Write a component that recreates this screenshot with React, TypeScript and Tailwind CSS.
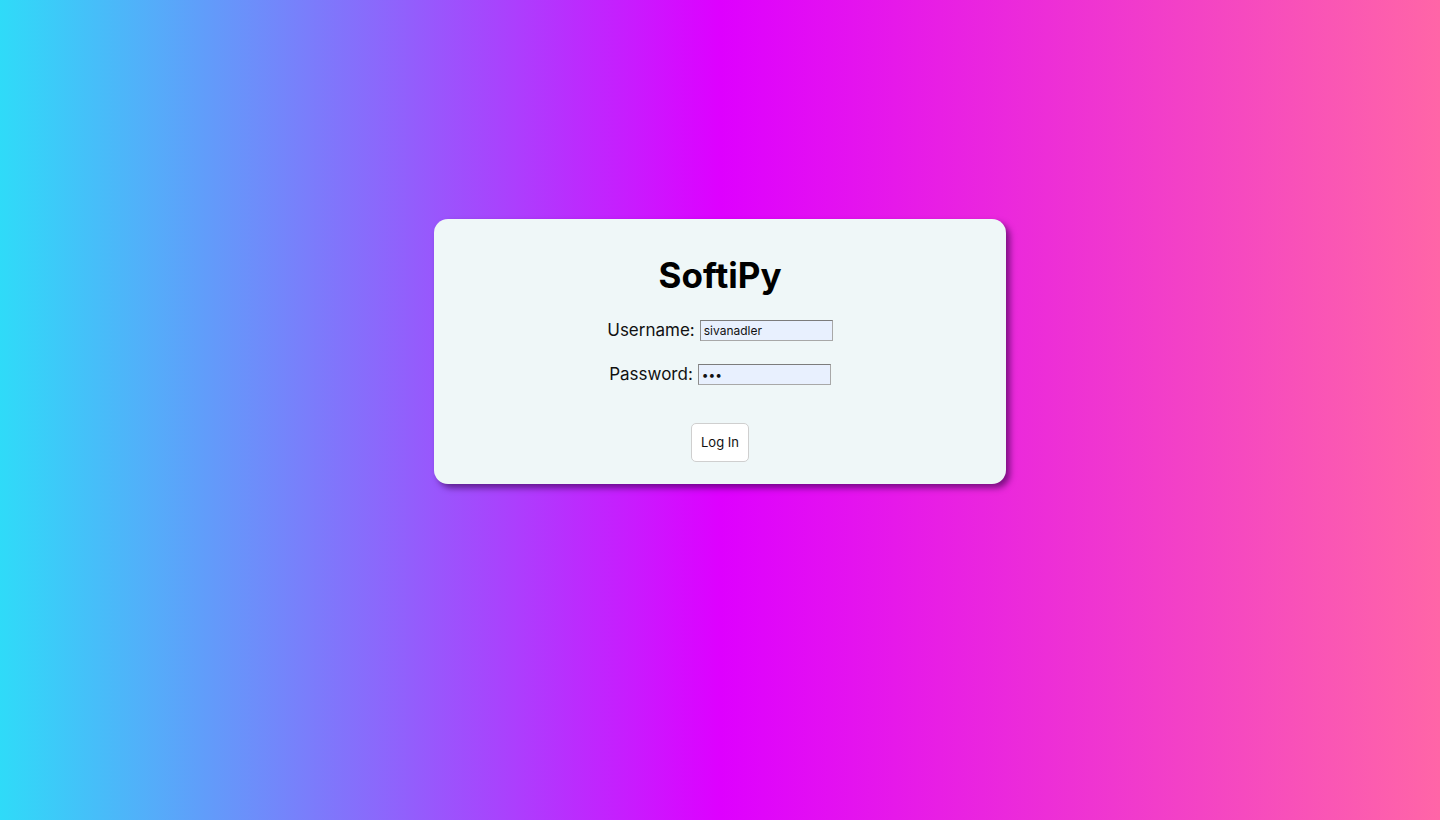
const LoginCard = () => {
  return (
    <div className="w-[572px] rounded-[14px] bg-[#eff7f8] shadow-[4px_4px_6px_rgba(50,0,70,0.6)] pt-[34px] pb-[22px] flex flex-col items-center">
      <h1 className="text-[35px] leading-[44px] font-bold text-black">SoftiPy</h1>
      <form className="flex flex-col items-center mt-[21px]" onSubmit={(e) => e.preventDefault()}>
        <div className="flex items-center h-[24px]">
          <label className="text-[17px] leading-[24px] text-[#111] mr-[5px]">Username:</label>
          <input
            type="text"
            defaultValue="sivanadler"
            className="w-[133px] h-[21px] bg-[#e8f0fe] border border-[#a8a8a8] border-t-[#7c7c7c] border-l-[#8c8c8c] px-[3px] text-[12px] text-[#111] outline-none"
          />
        </div>
        <div className="flex items-center h-[24px] mt-[20px]">
          <label className="text-[17px] leading-[24px] text-[#111] mr-[5px]">Password:</label>
          <input
            type="password"
            defaultValue="abc"
            className="w-[133px] h-[21px] bg-[#e8f0fe] border border-[#a8a8a8] border-t-[#7c7c7c] border-l-[#8c8c8c] px-[3px] text-[12px] text-[#111] outline-none"
          />
        </div>
        <button
          type="submit"
          className="mt-[37px] w-[58px] h-[39px] bg-white border border-[#cfcfcf] rounded-[5px] text-[13px] text-[#111]"
        >
          Log In
        </button>
      </form>
    </div>
  );
};

export default function App() {
  return (
    <div
      className="w-full h-[820px] flex justify-center pt-[219px] bg-[linear-gradient(to_right,#2fdbf8_0%,#de00ff_50%,#ff65a7_100%)]"
      style={{ fontFamily: "Inter, 'Noto Sans', sans-serif" }}
    >
      <div>
        <LoginCard />
      </div>
    </div>
  );
}
